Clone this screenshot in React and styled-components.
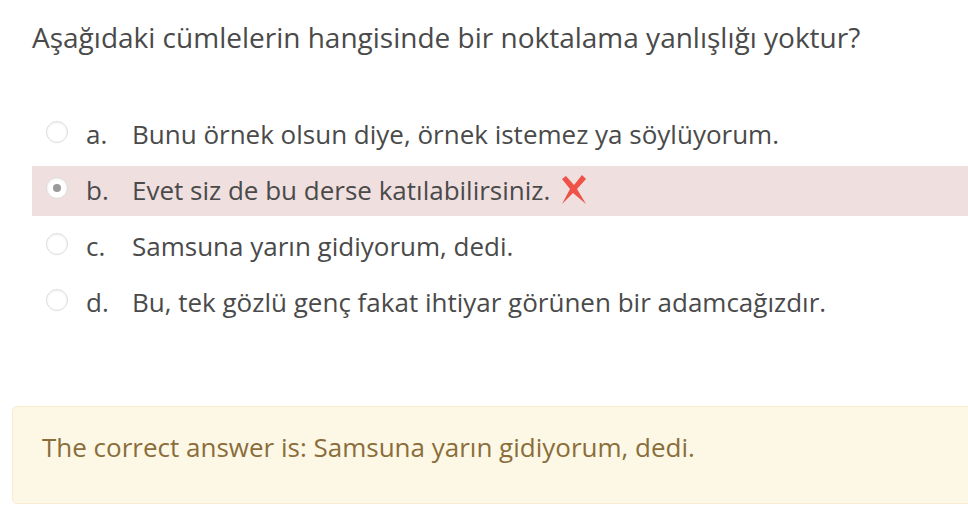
import styled, { createGlobalStyle } from "styled-components";

const GlobalStyle = createGlobalStyle`
    html, body {
        margin: 0;
        padding: 0;
        background: #fff;
    }
    body {
        font-family: "Open Sans", "Noto Sans", sans-serif;
        color: #444;
    }
`;

const Page = styled.div`
    width: 968px;
    height: 516px;
    overflow: hidden;
    padding: 16px 0 0 12px;
    box-sizing: border-box;
`;

const Question = styled.div`
    font-size: 28px;
    line-height: 42px;
    color: #4a4a4a;
    margin-left: 20px;
`;

const Answers = styled.div`
    margin: 52px 0 0 20px;
    display: flex;
    flex-direction: column;
    gap: 6px;
`;

const Row = styled.div`
    display: flex;
    align-items: center;
    height: 50px;
    box-sizing: border-box;
    padding-bottom: 2px;
    margin-right: -8px;
    background: ${(p) => (p.$wrong ? "#efdfdf" : "transparent")};
    font-size: 26px;
    line-height: 36px;
    color: #4a4a4a;
`;

const Radio = styled.span`
    width: 22px;
    height: 22px;
    margin: 0 18px 4px 14px;
    border-radius: 50%;
    border: 1px solid #dcdcdc;
    background: #fff;
    box-shadow: inset 0 1px 3px rgba(0, 0, 0, 0.06);
    box-sizing: border-box;
    display: flex;
    align-items: center;
    justify-content: center;
    flex-shrink: 0;

    &::after {
        content: "";
        display: ${(p) => (p.$checked ? "block" : "none")};
        width: 8px;
        height: 8px;
        border-radius: 50%;
        background: #9a9a9a;
    }
`;

const Letter = styled.span`
    width: 46px;
    flex-shrink: 0;
`;

const Label = styled.span`
    display: flex;
    align-items: center;
    gap: 11px;
`;

const Feedback = styled.div`
    margin-top: 78px;
    margin-right: -8px;
    height: 98px;
    box-sizing: border-box;
    padding: 22px 29px;
    background: #fcf8e5;
    border: 1px solid #f8ebd2;
    border-radius: 5px;
    color: #8a6d3b;
    font-size: 26px;
    line-height: 36px;
`;

function WrongMark() {
    return (
        <svg width="26" height="30" viewBox="0 0 26 30">
            <polygon
                fill="#ef5246"
                points="1,4 5,1 13,10 21,0 25,4 16,14 25,29 12,18 1,29 9,14"
            />
        </svg>
    );
}

const answers = [
    { letter: "a.", text: "Bunu örnek olsun diye, örnek istemez ya söylüyorum." },
    { letter: "b.", text: "Evet siz de bu derse katılabilirsiniz.", checked: true },
    { letter: "c.", text: "Samsuna yarın gidiyorum, dedi." },
    { letter: "d.", text: "Bu, tek gözlü genç fakat ihtiyar görünen bir adamcağızdır." },
];

export default function App() {
    return (
        <>
            <GlobalStyle />
            <Page>
                <Question>
                    Aşağıdaki cümlelerin hangisinde bir noktalama yanlışlığı yoktur?
                </Question>
                <Answers>
                    {answers.map((a) => (
                        <Row key={a.letter} $wrong={a.checked}>
                            <Radio $checked={a.checked} />
                            <Letter>{a.letter}</Letter>
                            <Label>
                                {a.text}
                                {a.checked && <WrongMark />}
                            </Label>
                        </Row>
                    ))}
                </Answers>
                <Feedback>The correct answer is: Samsuna yarın gidiyorum, dedi.</Feedback>
            </Page>
        </>
    );
}
